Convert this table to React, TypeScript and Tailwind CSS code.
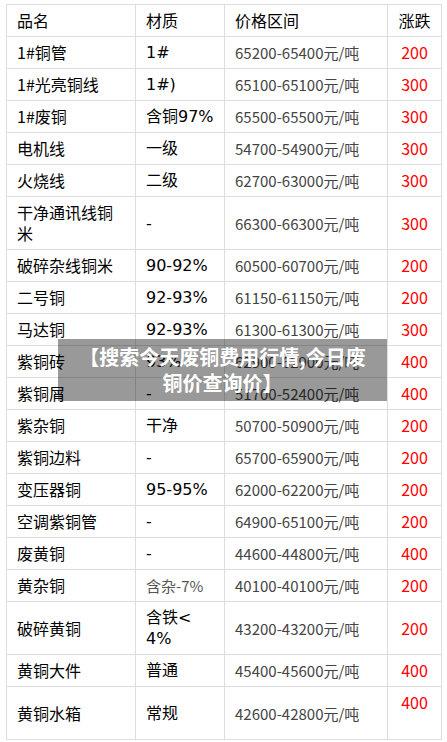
import React from 'react';

interface PriceRow {
  name: React.ReactNode;
  grade: React.ReactNode;
  price: string;
  change: React.ReactNode;
  smallGrade?: boolean;
}

const rows: PriceRow[] = [
  { name: '1#铜管', grade: '1#', price: '65200-65400元/吨', change: '200' },
  { name: '1#光亮铜线', grade: '1#)', price: '65100-65100元/吨', change: '300' },
  { name: '1#废铜', grade: '含铜97%', price: '65500-65500元/吨', change: '300' },
  { name: '电机线', grade: '一级', price: '54700-54900元/吨', change: '300' },
  { name: '火烧线', grade: '二级', price: '62700-63000元/吨', change: '300' },
  { name: '干净通讯线铜米', grade: '-', price: '66300-66300元/吨', change: '300' },
  { name: '破碎杂线铜米', grade: '90-92%', price: '60500-60700元/吨', change: '200' },
  { name: '二号铜', grade: '92-93%', price: '61150-61150元/吨', change: '200' },
  { name: '马达铜', grade: '92-93%', price: '61300-61300元/吨', change: '300' },
  { name: '紫铜砖', grade: '93%', price: '62900-62900元/吨', change: '400' },
  { name: '紫铜屑', grade: '-', price: '51700-52400元/吨', change: '400' },
  { name: '紫杂铜', grade: '干净', price: '50700-50900元/吨', change: '200' },
  { name: '紫铜边料', grade: '-', price: '65700-65900元/吨', change: '200' },
  { name: '变压器铜', grade: '95-95%', price: '62000-62200元/吨', change: '200' },
  { name: '空调紫铜管', grade: '-', price: '64900-65100元/吨', change: '200' },
  { name: '废黄铜', grade: '-', price: '44600-44800元/吨', change: '400' },
  { name: '黄杂铜', grade: '含杂-7%', price: '40100-40100元/吨', change: '200', smallGrade: true },
  { name: '破碎黄铜', grade: <>含铁&lt;<br />4%</>, price: '43200-43200元/吨', change: '200' },
  { name: '黄铜大件', grade: '普通', price: '45400-45600元/吨', change: '400' },
  { name: '黄铜水箱', grade: '常规', price: '42600-42800元/吨', change: <>400<br />&nbsp;</> },
];

const cell = 'border border-[#dddddd] px-[10px] py-[5px] align-middle';

export default function App() {
  return (
    <div className="min-h-screen bg-white pt-[4px] pl-[6px] font-['Noto_Sans_CJK_SC','Noto_Sans',sans-serif] leading-[21px]">
      <div className="relative w-[435px]">
        <table className="w-[435px] table-fixed border-collapse">
          <colgroup>
            <col className="w-[129px]" />
            <col className="w-[89px]" />
            <col className="w-[163px]" />
            <col className="w-[54px]" />
          </colgroup>
          <thead>
            <tr className="text-[16px] text-black">
              <th className={`${cell} text-left font-normal`}>品名</th>
              <th className={`${cell} text-left font-normal`}>材质</th>
              <th className={`${cell} text-left font-normal`}>价格区间</th>
              <th className={`${cell} text-center font-normal`}>涨跌</th>
            </tr>
          </thead>
          <tbody>
            {rows.map((r, i) => (
              <tr key={i}>
                <td className={`${cell} text-[16px] text-black`}>{r.name}</td>
                <td
                  className={`${cell} ${
                    r.smallGrade
                      ? 'text-[15px] text-[#555555]'
                      : "font-['DejaVu_Sans','Noto_Sans_CJK_SC',sans-serif] text-[16px] text-black"
                  }`}
                >
                  {r.grade}
                </td>
                <td className={`${cell} text-[15px] text-[#444444] whitespace-nowrap`}>{r.price}</td>
                <td className={`${cell} text-center text-[16px] text-[#ff0000]`}>{r.change}</td>
              </tr>
            ))}
          </tbody>
        </table>

        {/* caption banner laid over the table */}
        <div className="absolute left-[52px] top-[335px] w-[329px] bg-black/40 px-[16px] py-[5px] text-center text-[20px] font-bold leading-[26px] text-white">
          【搜索今天废铜费用行情,今日废铜价查询价】
        </div>
      </div>
    </div>
  );
}
